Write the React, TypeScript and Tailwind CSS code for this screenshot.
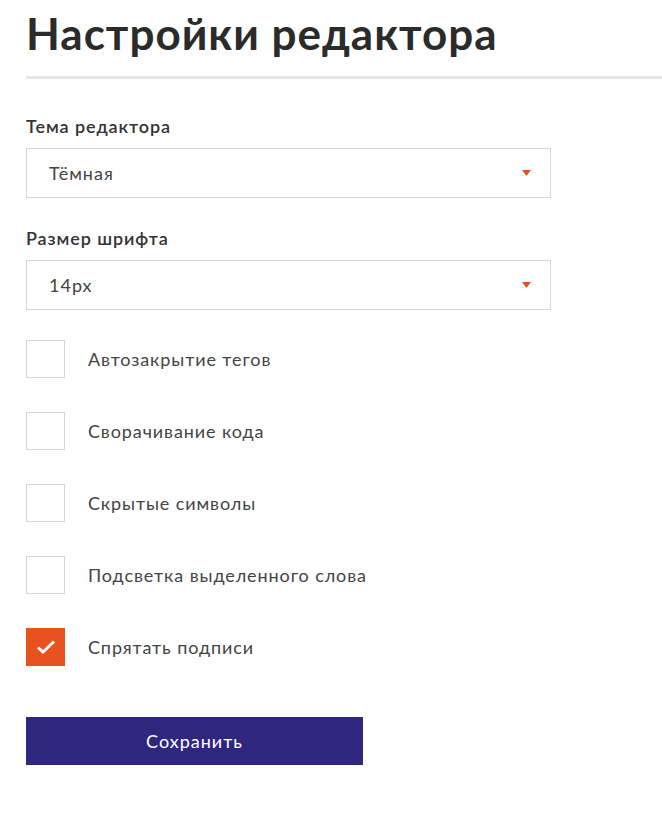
import React, { useState } from "react";

const selects = [
  { label: "Тема редактора", value: "Тёмная", options: ["Тёмная", "Светлая"] },
  { label: "Размер шрифта", value: "14px", options: ["12px", "14px", "16px"] },
];

const initialChecks = [
  { label: "Автозакрытие тегов", checked: false },
  { label: "Сворачивание кода", checked: false },
  { label: "Скрытые символы", checked: false },
  { label: "Подсветка выделенного слова", checked: false },
  { label: "Спрятать подписи", checked: true },
];

const Arrow = () => (
  <svg width="9" height="6" viewBox="0 0 9 6" className="shrink-0">
    <path d="M0 0H9L4.5 6Z" fill="#e8521f" />
  </svg>
);

const App = () => {
  const [checks, setChecks] = useState(initialChecks);

  const toggle = (i: number) =>
    setChecks(checks.map((c, j) => (j === i ? { ...c, checked: !c.checked } : c)));

  return (
    <div className="min-h-screen bg-white pl-[26px] pt-[6px] font-['Lato',sans-serif] text-[#2b2b2b]">
      <h1 className="text-[44px] font-bold leading-[54px] tracking-[1px]">Настройки редактора</h1>
      <div className="mt-[16px] h-[3px] bg-[#e6e6e6]"></div>

      <div className="mt-[37px] flex flex-col">
        {selects.map((s) => (
          <div key={s.label} className="mb-[30px] flex flex-col">
            <span className="text-[18px] font-semibold leading-[20px] tracking-[0.9px] text-[#333]">{s.label}</span>
            <button className="mt-[12px] flex h-[50px] w-[525px] items-center justify-between border border-[#d6d6d6] pl-[22px] pr-[19px] text-left">
              <span className="text-[18px] tracking-[1px] text-[#444]">{s.value}</span>
              <Arrow />
            </button>
          </div>
        ))}
      </div>

      <div className="flex flex-col gap-[34px]">
        {checks.map((c, i) => (
          <label key={c.label} className="flex cursor-pointer items-center gap-[23px]" onClick={() => toggle(i)}>
            {c.checked ? (
              <span className="flex h-[38px] w-[39px] items-center justify-center bg-[#e8521f]">
                <svg width="20" height="16" viewBox="0 0 20 16">
                  <path d="M2 8.5L7 13L18 2.5" fill="none" stroke="white" strokeWidth="3" />
                </svg>
              </span>
            ) : (
              <span className="h-[38px] w-[39px] border border-[#d6d6d6] bg-white"></span>
            )}
            <span className="text-[18px] leading-[22px] tracking-[0.9px] text-[#444]">{c.label}</span>
          </label>
        ))}
      </div>

      <button className="mt-[51px] h-[48px] w-[337px] bg-[#2f2680] text-[18px] tracking-[1px] text-white">
        Сохранить
      </button>
    </div>
  );
};

export default App;
